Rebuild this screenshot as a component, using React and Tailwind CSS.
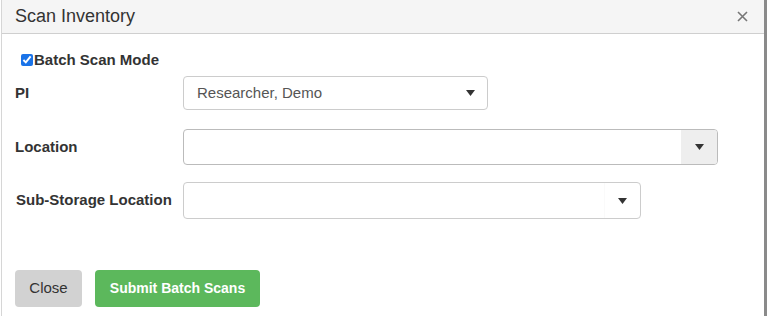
import React from "react";

function Arrow() {
  return (
    <svg width="9" height="6" viewBox="0 0 9 6" className="block">
      <path d="M0 0 H9 L4.5 6 Z" fill="#333" />
    </svg>
  );
}

export default function App() {
  return (
    <div className="w-[768px] h-[316px] bg-white overflow-hidden flex" style={{ fontFamily: '"Liberation Sans", Arial, sans-serif' }}>
      <div className="flex-1 flex flex-col border-l border-[#d6d6d6] border-r-[3px] border-r-[#8a8a8a] ml-px mr-px">
        <div className="h-[34px] bg-[#f5f5f5] border-b border-[#cfcfcf] flex items-center justify-between pl-[13px] pr-[16px]">
          <span className="text-[18px] text-[#333]">Scan Inventory</span>
          <svg width="11" height="11" viewBox="0 0 11 11" className="block">
            <path d="M1 1 L10 10 M10 1 L1 10" stroke="#777" strokeWidth="1.6" />
          </svg>
        </div>
        <div className="flex-1 flex flex-col pl-[13px] pt-[17px]">
          <label className="flex items-center pl-[6px] h-[18px]">
            <input type="checkbox" defaultChecked className="w-[12px] h-[12px] m-0 mr-px accent-[#1a73e8]" />
            <span className="text-[15px] font-bold text-[#333]">Batch Scan Mode</span>
          </label>
          <div className="flex items-center mt-[7px] h-[34px]">
            <span className="w-[168px] text-[15px] font-bold text-[#333]">PI</span>
            <div className="w-[305px] h-[34px] border border-[#ccc] rounded-[4px] flex items-center justify-between pl-[13px] pr-[12px]">
              <span className="text-[15px] text-[#555]">Researcher, Demo</span>
              <Arrow />
            </div>
          </div>
          <div className="flex items-center mt-[19px] h-[36px]">
            <span className="w-[168px] text-[15px] font-bold text-[#333]">Location</span>
            <div className="w-[535px] h-[36px] border border-[#bbb] rounded-[4px] flex overflow-hidden">
              <div className="flex-1" />
              <div className="w-[36px] bg-[#eeeeee] flex items-center justify-center">
                <Arrow />
              </div>
            </div>
          </div>
          <div className="flex items-center mt-[17px] h-[37px]">
            <span className="w-[168px] text-[15px] font-bold text-[#333] pl-px">Sub-Storage Location</span>
            <div className="w-[458px] h-[37px] border border-[#ccc] rounded-[4px] flex overflow-hidden">
              <div className="flex-1" />
              <div className="w-[36px] border-l border-[#fafafa] flex items-center justify-center">
                <Arrow />
              </div>
            </div>
          </div>
          <div className="flex mt-[51px] gap-[13px]">
            <button className="w-[67px] h-[37px] bg-[#d2d2d2] rounded-[4px] text-[15px] text-[#333]">Close</button>
            <button className="w-[165px] h-[37px] bg-[#5cb85c] rounded-[4px] text-[14px] text-white font-bold">Submit Batch Scans</button>
          </div>
        </div>
      </div>
    </div>
  );
}
